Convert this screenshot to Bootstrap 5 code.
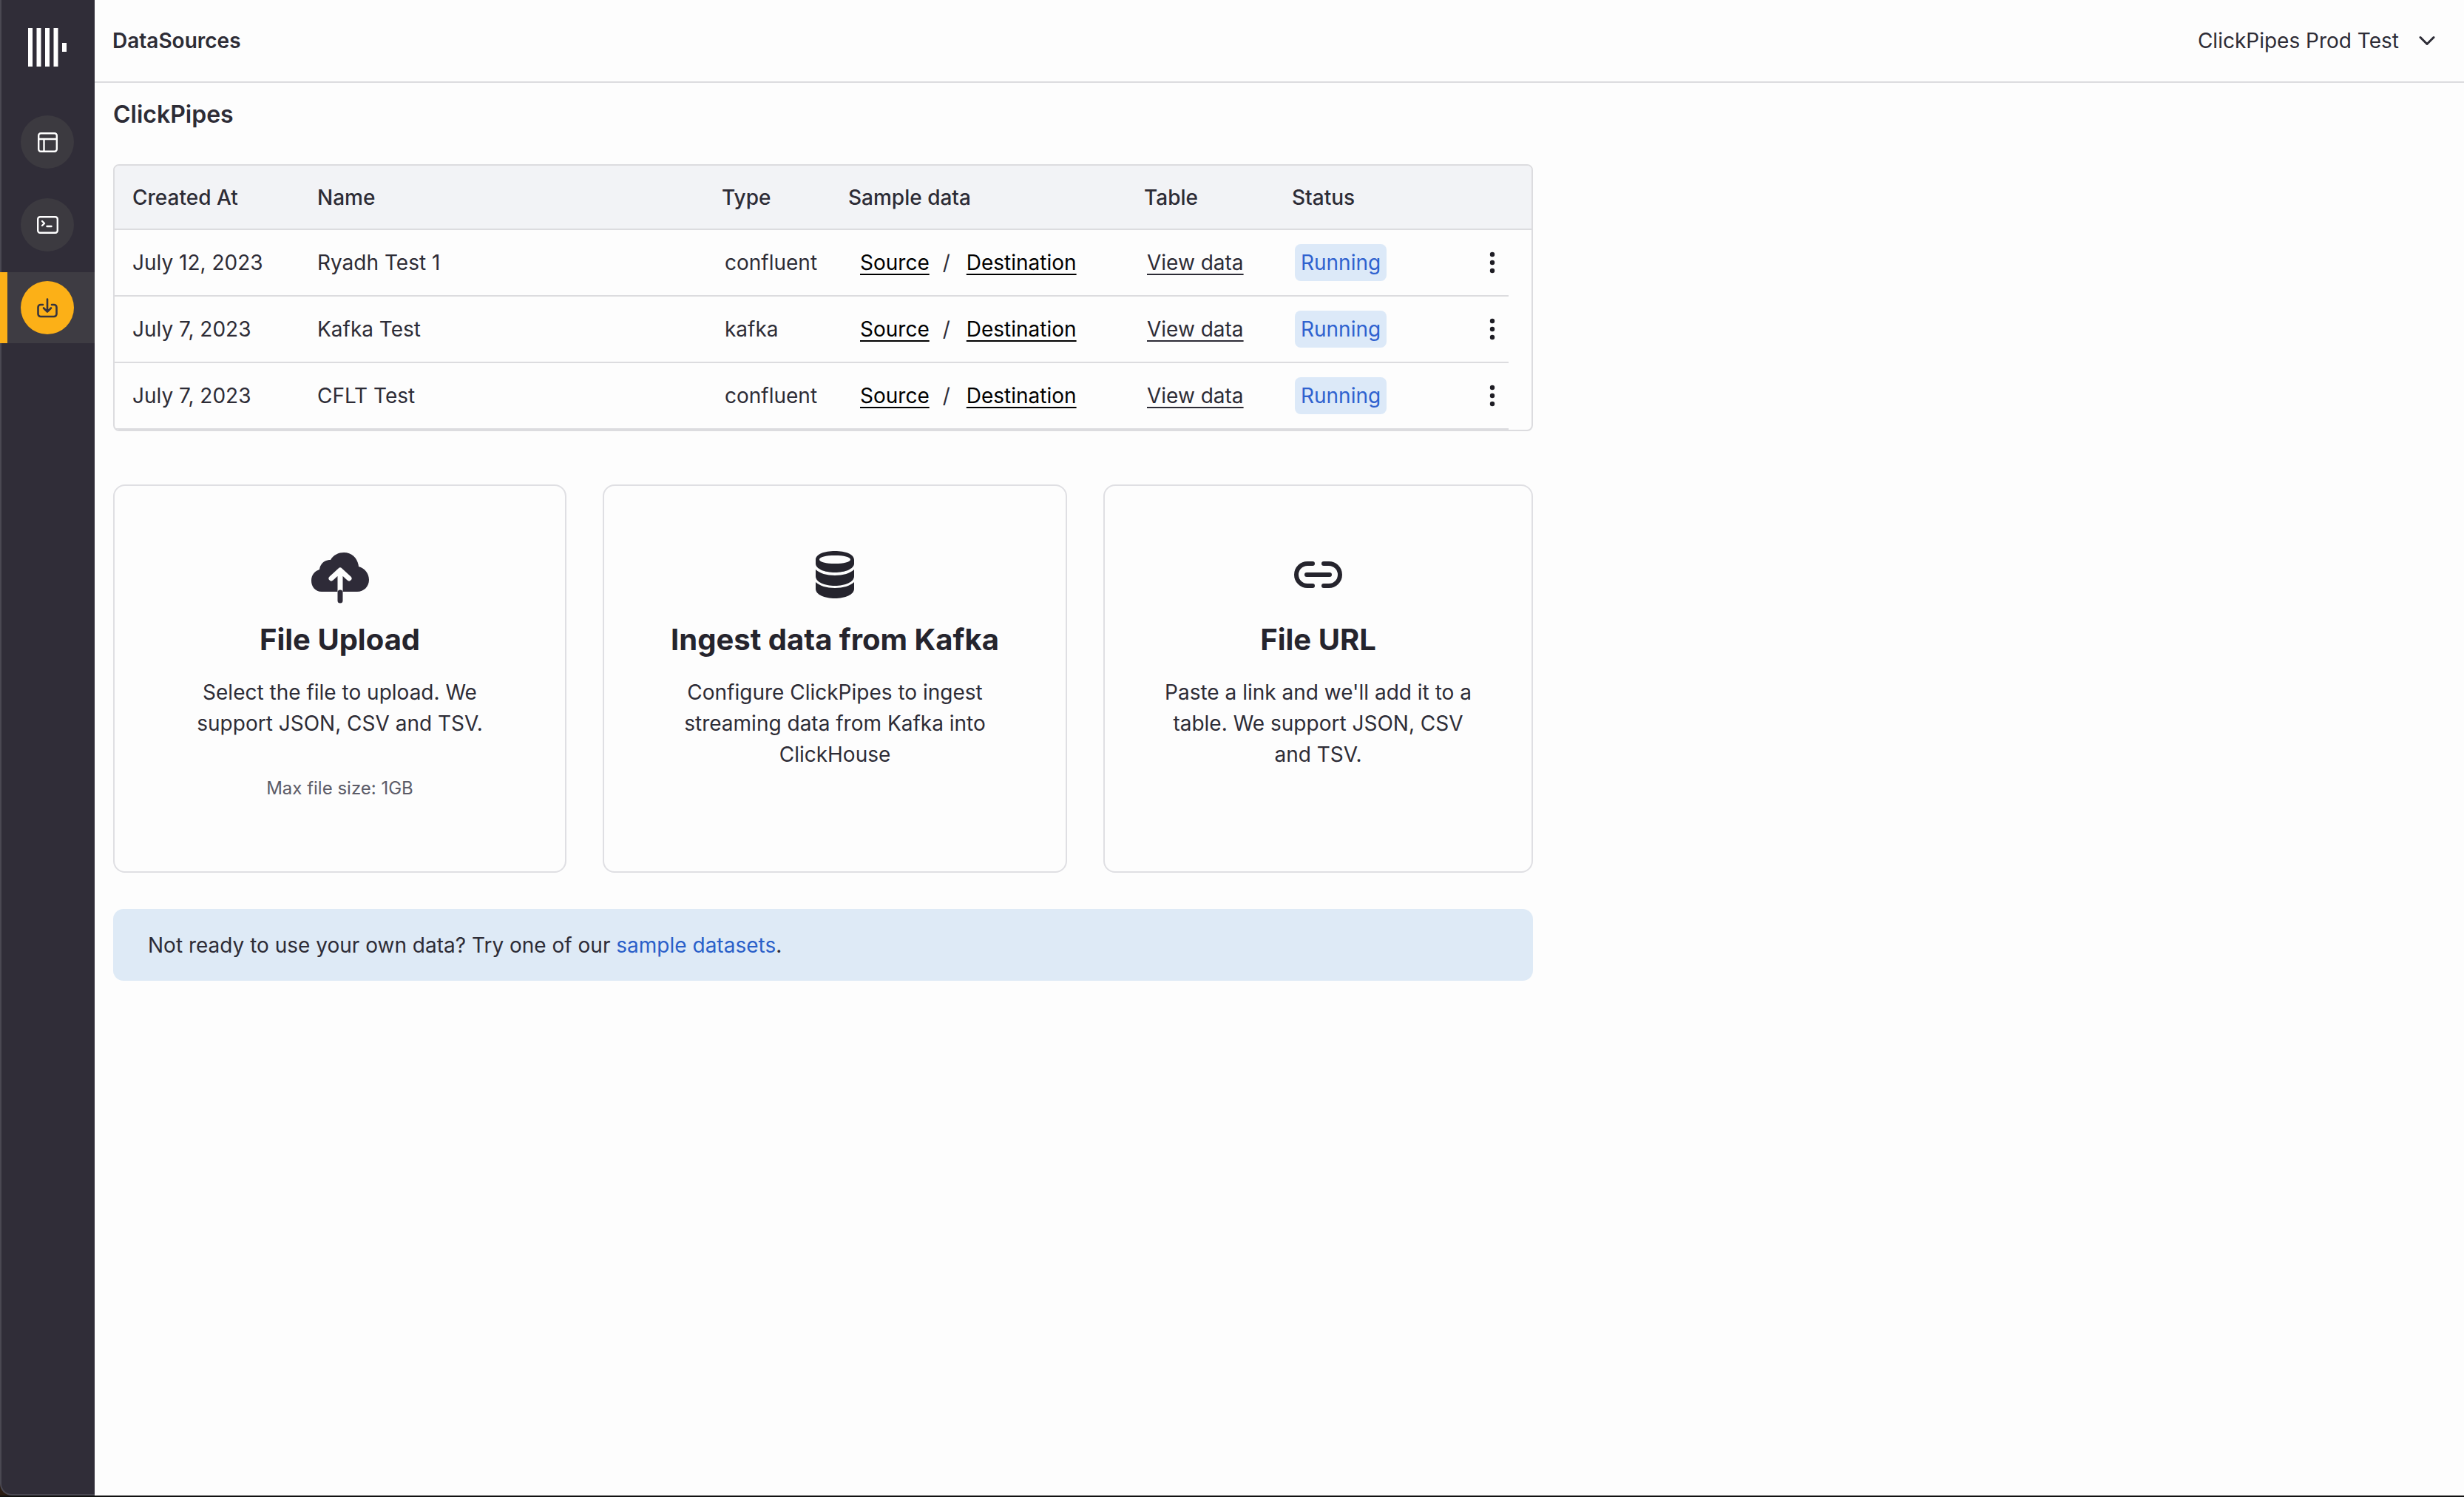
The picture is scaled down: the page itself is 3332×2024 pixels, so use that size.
<!DOCTYPE html>
<html lang="en">
<head>
    <meta charset="UTF-8">
    <title>DataSources</title>
    <link rel="stylesheet" href="https://cdn.jsdelivr.net/npm/bootstrap@5.3.0/dist/css/bootstrap.min.css">
    <style>
        body {
            background: #fdfdfd;
            color: #2d2c36;
            font-family: Inter, "Liberation Sans", sans-serif;
            font-size: 28px;
            line-height: 42px;
        }
        .app-shell { height: 2024px; background: #2a1c12; border-bottom: 2px solid #111; }
        .side-rail {
            width: 128px;
            flex: none;
            background: #302d38;
            border-left: 2px solid #4a4852;
            border-bottom: 2px solid #4a4852;
            border-bottom-left-radius: 16px;
        }
        .rail-logo { height: 128px; margin-left: -2px; }
        .rail-list { margin-left: -2px; padding-top: 16px; gap: 16px; }
        .rail-item { height: 96px; border-left: 10px solid transparent; padding-right: 10px; }
        .rail-item.is-active { background: #3e3c43; border-left-color: #fcb017; }
        .rail-circle {
            width: 72px;
            height: 72px;
            background: #3c3a40;
            color: #fff;
        }
        .is-active .rail-circle { background: #fcb017; color: #37343d; }
        .main-pane { background: #fdfdfd; }
        .top-bar { height: 112px; padding: 0 39px 0 24px; border-bottom: 2px solid #dcdcdf; }
        .top-title { font-weight: 600; }
        .top-right { gap: 27px; }
        .page-body { width: 1945px; padding: 0 0 0 25px; }
        .page-title { font-size: 32px; font-weight: 600; line-height: 48px; margin: 19px 0 43px; }
        .table-box {
            border: 2px solid #dcdcdf;
            border-radius: 8px;
            overflow: hidden;
            margin-bottom: 72px;
        }
        .pipes-table {
            table-layout: fixed;
            width: 100%;
            margin: 0;
            --bs-table-bg: transparent;
            --bs-table-color: #2d2c36;
            color: #2d2c36;
        }
        .pipes-table th {
            height: 86px;
            padding: 0 0 0 24px;
            background: #f2f3f6;
            font-weight: 500;
            vertical-align: middle;
            border-bottom: 2px solid #dcdcdf;
        }
        .pipes-table td {
            height: 90px;
            padding: 0 0 0 24px;
            vertical-align: middle;
            border-bottom: 2px solid #dcdcdf;
        }
        .pipes-table td.cell-spare { border-bottom: 0; padding: 0; }
        .pipes-table td.cell-type { padding-left: 28px; }
        .pipes-table td.cell-sample { padding-left: 40px; }
        .pipes-table td.cell-view { padding-left: 28px; }
        .pipes-table td.cell-status { padding-left: 28px; }
        .pipes-table td.cell-dots { padding: 0 0 0 67px; }
        .col-created { width: 250px; }
        .col-name { width: 547px; }
        .col-type { width: 171px; }
        .col-sample { width: 400px; }
        .col-table { width: 200px; }
        .col-status { width: 224px; }
        .col-dots { width: 93px; }
        .col-spare { width: 33px; }
        .pipes-table a { color: #000; text-underline-offset: 5px; text-decoration-thickness: 2px; }
        .pipes-table a.view-link { color: #2d2c36; }
        .slash-sep { margin: 0 22px 0 18px; }
        .run-pill {
            display: inline-block;
            background: #dce9f8;
            color: #2f62cf;
            border-radius: 8px;
            line-height: 50px;
            height: 50px;
            padding: 0 8px;
        }
        .source-grid { display: grid; grid-template-columns: 613px 628px 581px; gap: 49px; }
        .source-box {
            height: 525px;
            border: 2px solid #dfdfe3;
            border-radius: 16px;
            padding: 76px 40px 0;
            text-align: center;
        }
        .source-icon { height: 88px; margin-bottom: 14px; }
        .source-name { font-size: 40px; font-weight: 700; line-height: 60px; margin: 0 0 20px; color: #25242d; }
        .source-text { margin: 0; }
        .source-note { font-size: 24px; line-height: 36px; color: #5c5c68; margin: 49px 0 0; }
        .cloud-shift { margin-top: 8px; }
        .sample-banner {
            background: #deeaf6;
            border-radius: 14px;
            height: 97px;
            margin-top: 49px;
            padding-left: 47px;
        }
        .sample-banner a { color: #2a5fc9; text-decoration: none; }
    </style>
</head>
<body>
    <div class="app-shell d-flex">
        <nav class="side-rail d-flex flex-column">
            <div class="rail-logo d-flex align-items-center justify-content-center">
                <svg width="52" height="52" viewBox="0 0 52 52" fill="#fff"><rect x="0" y="0" width="6" height="52"/><rect x="11.5" y="0" width="6" height="52"/><rect x="23" y="0" width="6" height="52"/><rect x="34.5" y="0" width="6" height="52"/><rect x="46" y="20" width="6" height="12"/></svg>
            </div>
            <div class="rail-list d-flex flex-column">
                <div class="rail-item d-flex align-items-center justify-content-center">
                    <div class="rail-circle rounded-circle d-flex align-items-center justify-content-center">
                        <svg width="27" height="27" viewBox="0 0 27 27" fill="none" stroke="currentColor" stroke-width="2.4"><rect x="1.200" y="1.200" width="24.600" height="24.600" rx="3"/><path d="M1.200 9h24.600M8.500 9v16.800"/></svg>
                    </div>
                </div>
                <div class="rail-item d-flex align-items-center justify-content-center">
                    <div class="rail-circle rounded-circle d-flex align-items-center justify-content-center">
                        <svg width="29" height="24" viewBox="0 0 29 24" fill="none" stroke="currentColor" stroke-width="2.4" stroke-linecap="round" stroke-linejoin="round"><rect x="1.200" y="1.200" width="26.600" height="21.600" rx="3"/><path d="M7 7l3 3-3 3M13.500 14h6"/></svg>
                    </div>
                </div>
                <div class="rail-item is-active d-flex align-items-center justify-content-center">
                    <div class="rail-circle rounded-circle d-flex align-items-center justify-content-center">
                        <svg width="28" height="27" viewBox="0 0 28 27" fill="none" stroke="currentColor" stroke-width="2.6" stroke-linecap="round" stroke-linejoin="round"><path d="M14 1.500v17M9 13.500l5 5 5-5M8 9H5a3.500 3.500 0 0 0-3.500 3.500v9A3.500 3.500 0 0 0 5 25h18a3.500 3.500 0 0 0 3.500-3.500v-9A3.500 3.500 0 0 0 23 9h-3"/></svg>
                    </div>
                </div>
            </div>
        </nav>
        <main class="main-pane flex-grow-1">
            <header class="top-bar d-flex align-items-center justify-content-between">
                <div class="top-title">DataSources</div>
                <div class="top-right d-flex align-items-center">
                    <span>ClickPipes Prod Test</span>
                    <svg width="22" height="14" viewBox="0 0 22 14" fill="none" stroke="#2d2c36" stroke-width="3" stroke-linecap="round" stroke-linejoin="round"><path d="M2 2.500l9 9 9-9"/></svg>
                </div>
            </header>
            <div class="page-body">
                <h1 class="page-title">ClickPipes</h1>
                <div class="table-box">
                    <table class="table pipes-table">
                        <colgroup>
                            <col class="col-created"><col class="col-name"><col class="col-type"><col class="col-sample"><col class="col-table"><col class="col-status"><col class="col-dots"><col class="col-spare">
                        </colgroup>
                        <thead>
                            <tr><th>Created At</th><th>Name</th><th>Type</th><th>Sample data</th><th>Table</th><th>Status</th><th></th><th></th></tr>
                        </thead>
                        <tbody>
                            <tr>
                                <td>July 12, 2023</td><td>Ryadh Test 1</td><td class="cell-type">confluent</td>
                                <td class="cell-sample"><a href="#">Source</a><span class="slash-sep">/</span><a href="#">Destination</a></td>
                                <td class="cell-view"><a class="view-link" href="#">View data</a></td>
                                <td class="cell-status"><span class="run-pill">Running</span></td>
                                <td class="cell-dots"><svg class="d-block" width="8" height="30" viewBox="0 0 8 30" fill="#1e1d24"><circle cx="4" cy="4" r="3.200"/><circle cx="4" cy="15" r="3.200"/><circle cx="4" cy="26" r="3.200"/></svg></td>
                                <td class="cell-spare"></td>
                            </tr>
                            <tr>
                                <td>July 7, 2023</td><td>Kafka Test</td><td class="cell-type">kafka</td>
                                <td class="cell-sample"><a href="#">Source</a><span class="slash-sep">/</span><a href="#">Destination</a></td>
                                <td class="cell-view"><a class="view-link" href="#">View data</a></td>
                                <td class="cell-status"><span class="run-pill">Running</span></td>
                                <td class="cell-dots"><svg class="d-block" width="8" height="30" viewBox="0 0 8 30" fill="#1e1d24"><circle cx="4" cy="4" r="3.200"/><circle cx="4" cy="15" r="3.200"/><circle cx="4" cy="26" r="3.200"/></svg></td>
                                <td class="cell-spare"></td>
                            </tr>
                            <tr>
                                <td>July 7, 2023</td><td>CFLT Test</td><td class="cell-type">confluent</td>
                                <td class="cell-sample"><a href="#">Source</a><span class="slash-sep">/</span><a href="#">Destination</a></td>
                                <td class="cell-view"><a class="view-link" href="#">View data</a></td>
                                <td class="cell-status"><span class="run-pill">Running</span></td>
                                <td class="cell-dots"><svg class="d-block" width="8" height="30" viewBox="0 0 8 30" fill="#1e1d24"><circle cx="4" cy="4" r="3.200"/><circle cx="4" cy="15" r="3.200"/><circle cx="4" cy="26" r="3.200"/></svg></td>
                                <td class="cell-spare"></td>
                            </tr>
                        </tbody>
                    </table>
                </div>
                <div class="source-grid">
                    <div class="source-box">
                        <div class="source-icon d-flex justify-content-center align-items-center">
                            <svg class="cloud-shift" width="78" height="69" viewBox="0 0 78 69"><path fill="#2e2b38" d="M14 53C5 53 0 46 0 38c0-8 5-13 11-15 1-8 7-13 15-13 4-7 11-10 18-10 11 0 19 8 20 19 8 2 14 9 14 18 0 9-7 16-16 16z"/><path fill="none" stroke="#fdfdfd" stroke-width="7" stroke-linecap="round" stroke-linejoin="round" d="M27 35l12-11 12 11M39 25v28"/><path fill="none" stroke="#2e2b38" stroke-width="7" stroke-linecap="round" d="M39 54v11"/></svg>
                        </div>
                        <h3 class="source-name">File Upload</h3>
                        <p class="source-text">Select the file to upload. We<br>support JSON, CSV and TSV.</p>
                        <p class="source-note">Max file size: 1GB</p>
                    </div>
                    <div class="source-box">
                        <div class="source-icon d-flex justify-content-center align-items-center">
                            <svg width="52" height="64" viewBox="0 0 52 64"><path fill="#25242d" fill-rule="evenodd" d="M26 0c14 0 26 4 26 12v5c0 7-12 12-26 12S0 24 0 17v-5C0 4 12 0 26 0zm0 6C14 6 5 8 5 11.500S14 17 26 17s21-2 21-5.500S38 6 26 6z"/><path fill="#25242d" d="M0 25c5 5 15 8 26 8s21-3 26-8v9c0 8-12 13-26 13S0 42 0 34z"/><path fill="#25242d" d="M0 42c5 5 15 8 26 8s21-3 26-8v9c0 8-12 13-26 13S0 59 0 51z"/></svg>
                        </div>
                        <h3 class="source-name">Ingest data from Kafka</h3>
                        <p class="source-text">Configure ClickPipes to ingest<br>streaming data from Kafka into<br>ClickHouse</p>
                    </div>
                    <div class="source-box">
                        <div class="source-icon d-flex justify-content-center align-items-center">
                            <svg width="65" height="36" viewBox="0 0 65 36" fill="none" stroke="#25242d" stroke-width="6" stroke-linecap="round"><path d="M25 3h-7a15 15 0 0 0 0 30h7M40 3h7a15 15 0 0 1 0 30h-7M17 18h31"/></svg>
                        </div>
                        <h3 class="source-name">File URL</h3>
                        <p class="source-text">Paste a link and we'll add it to a<br>table. We support JSON, CSV<br>and TSV.</p>
                    </div>
                </div>
                <div class="sample-banner d-flex align-items-center">
                    <span>Not ready to use your own data? Try one of our <a href="#">sample datasets</a>.</span>
                </div>
            </div>
        </main>
    </div>
    <script src="https://cdn.jsdelivr.net/npm/bootstrap@5.3.0/dist/js/bootstrap.bundle.min.js"></script>
</body>
</html>
